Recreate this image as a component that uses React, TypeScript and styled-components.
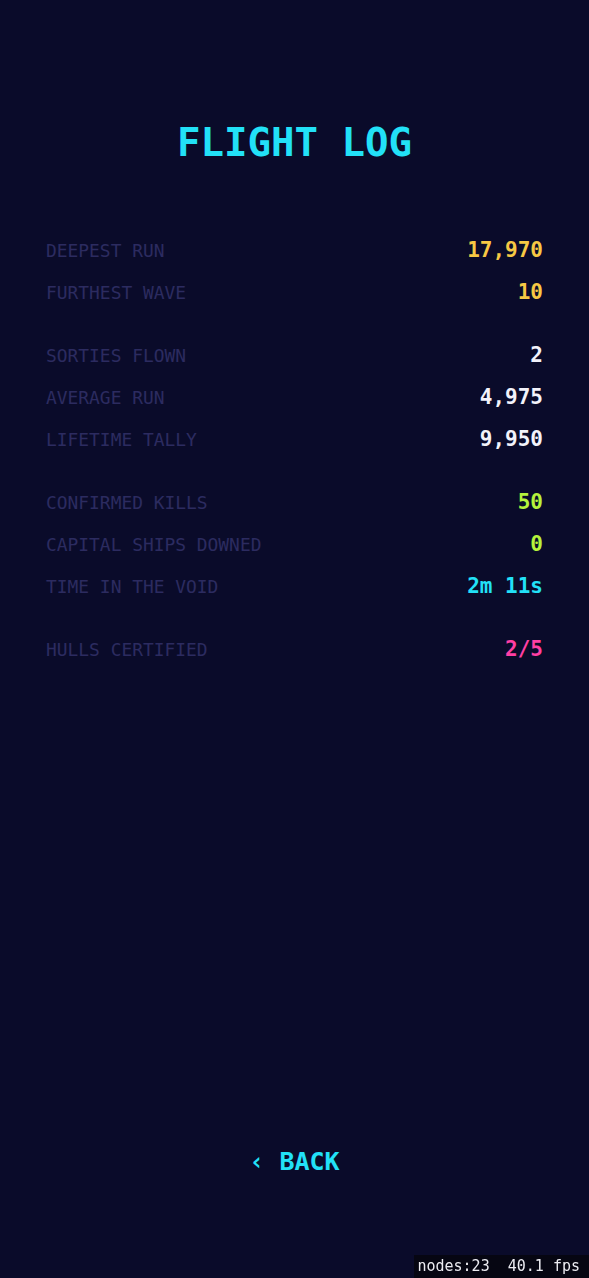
import styled, { createGlobalStyle } from "styled-components";

const GlobalStyle = createGlobalStyle`
    html, body {
        margin: 0;
        padding: 0;
        background: #0a0b2a;
    }
    * {
        box-sizing: border-box;
    }
`

type Stat = { label: string; value: string; color: string }

const groups: Stat[][] = [
    [
        { label: "DEEPEST RUN", value: "17,970", color: "#f7c844" },
        { label: "FURTHEST WAVE", value: "10", color: "#f7c844" },
    ],
    [
        { label: "SORTIES FLOWN", value: "2", color: "#f2f2fa" },
        { label: "AVERAGE RUN", value: "4,975", color: "#f2f2fa" },
        { label: "LIFETIME TALLY", value: "9,950", color: "#f2f2fa" },
    ],
    [
        { label: "CONFIRMED KILLS", value: "50", color: "#b6f23c" },
        { label: "CAPITAL SHIPS DOWNED", value: "0", color: "#b6f23c" },
        { label: "TIME IN THE VOID", value: "2m 11s", color: "#22e1f7" },
    ],
    [
        { label: "HULLS CERTIFIED", value: "2/5", color: "#ff3fa3" },
    ],
]

export default function App() {
    return (
        <>
            <GlobalStyle />
            <Page>
                <Title>FLIGHT LOG</Title>
                <StatList>
                    {groups.map((group, gi) => (
                        <Group key={gi}>
                            {group.map((s) => (
                                <Row key={s.label}>
                                    <Label>{s.label}</Label>
                                    <Value $color={s.color}>{s.value}</Value>
                                </Row>
                            ))}
                        </Group>
                    ))}
                </StatList>
                <BackButton>‹ BACK</BackButton>
            </Page>
            <Perf>nodes:23&nbsp;&nbsp;40.1 fps</Perf>
        </>
    );
}

const Page = styled.div`
    min-height: 100vh;
    display: flex;
    flex-direction: column;
    align-items: stretch;
    padding: 123px 46px 102px 46px;
    background: #0a0b2a;
    font-family: "DejaVu Sans Mono", "Liberation Mono", monospace;
`

const Title = styled.h1`
    margin: 0;
    text-align: center;
    font-size: 39px;
    line-height: 40px;
    font-weight: 700;
    color: #22e1f7;
`

const StatList = styled.div`
    margin-top: 66px;
    display: flex;
    flex-direction: column;
    gap: 21px;
`

const Group = styled.div`
    display: flex;
    flex-direction: column;
`

const Row = styled.div`
    height: 42px;
    display: flex;
    align-items: center;
    justify-content: space-between;
`

const Label = styled.span`
    font-size: 17.9px;
    color: #2c2b60;
`

const Value = styled.span<{ $color: string }>`
    font-size: 21px;
    font-weight: 700;
    color: ${(p) => p.$color};
`

const BackButton = styled.button`
    margin-top: auto;
    align-self: center;
    background: none;
    border: none;
    padding: 0;
    font-family: inherit;
    font-size: 25px;
    line-height: 29px;
    font-weight: 700;
    color: #22e1f7;
    cursor: pointer;
`

const Perf = styled.div`
    position: fixed;
    right: 0;
    bottom: 0;
    padding: 2px 9px 3px 3px;
    background: rgba(6, 6, 14, 0.85);
    color: #ececf2;
    font-family: "DejaVu Sans Mono", monospace;
    font-size: 15px;
    line-height: 18px;
`
